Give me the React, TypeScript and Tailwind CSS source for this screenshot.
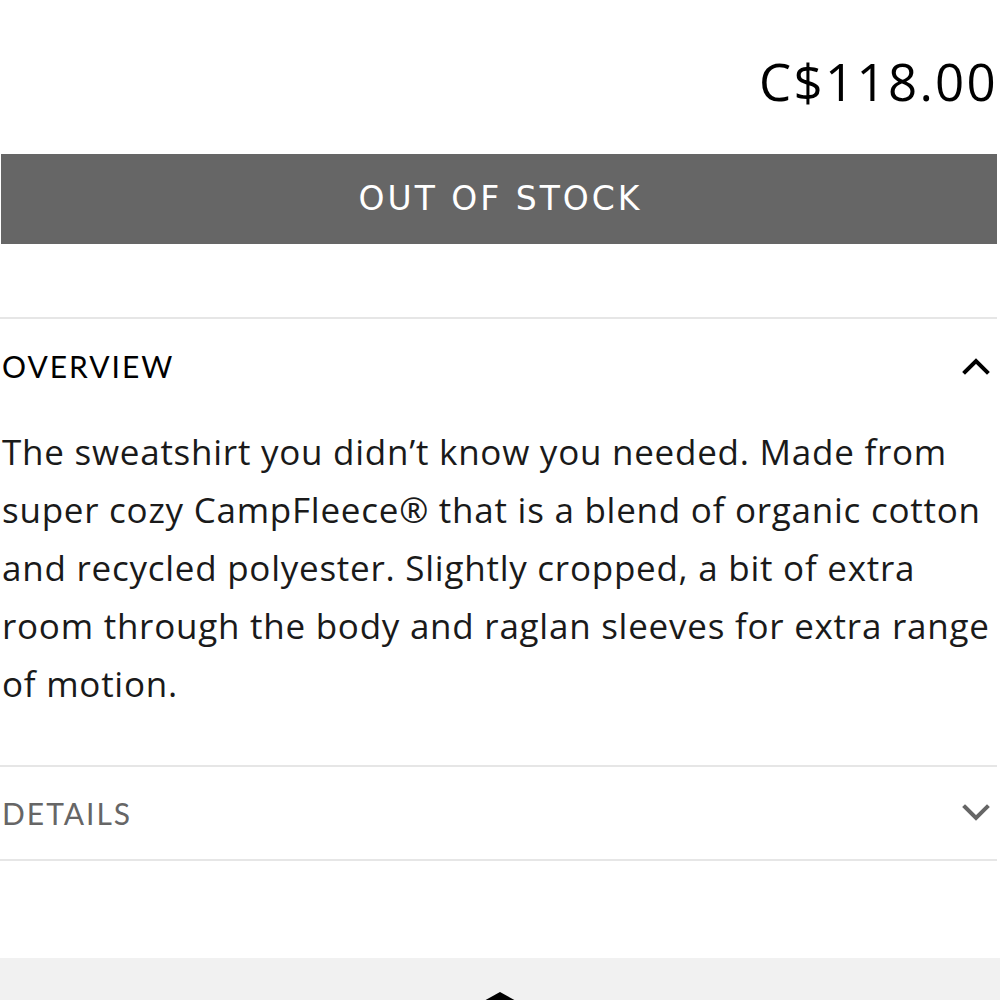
import React from "react";

const Chevron = ({ up, color }: { up?: boolean; color: string }) => (
  <svg width="28" height="18" viewBox="0 0 28 18" fill="none">
    <path
      d={up ? "M3 15 L14 4 L25 15" : "M3 3 L14 14 L25 3"}
      stroke={color}
      strokeWidth="4"
      strokeLinecap="square"
    />
  </svg>
);

export default function App() {
  return (
    <div
      className="w-[1000px] h-[1000px] overflow-hidden bg-white text-black"
      style={{ fontFamily: '"Lato", "Noto Sans", sans-serif' }}
    >
      <div className="flex justify-end pt-[46px] pr-[2px] h-[154px]">
        <span
          className="text-[51px] leading-[70px] tracking-[2.3px]"
          style={{ fontFamily: '"Open Sans", sans-serif' }}
        >
          C$118.00
        </span>
      </div>
      <div className="mx-[1px] w-[996px] h-[90px] bg-[#666666] flex items-center justify-center">
        <span
          className="text-white text-[33px] tracking-[3px] pl-[3px]"
          style={{ fontFamily: '"DejaVu Sans", sans-serif' }}
        >
          OUT OF STOCK
        </span>
      </div>
      <div className="mt-[73px] border-t-2 border-[#e6e6e6] w-[997px]">
        <div className="flex items-center justify-between h-[94px] pl-[2px] pr-[7px]">
          <span className="text-[30px] tracking-[2px]">OVERVIEW</span>
          <Chevron up color="#000" />
        </div>
        <p
          className="text-[35px] leading-[58px] tracking-[0.75px] pl-[2px] pt-[10px] pb-[52px] text-[#1a1a1a] whitespace-nowrap"
          style={{ fontFamily: '"Open Sans", sans-serif' }}
        >
          The sweatshirt you didn’t know you needed. Made from
          <br />
          super cozy CampFleece® that is a blend of organic cotton
          <br />
          and recycled polyester. Slightly cropped, a bit of extra
          <br />
          room through the body and raglan sleeves for extra range
          <br />
          of motion.
        </p>
      </div>
      <div className="border-t-2 border-[#e6e6e6] w-[997px]">
        <div className="flex items-center justify-between h-[92px] pl-[2px] pr-[7px]">
          <span className="text-[30px] tracking-[2px] text-[#666666]">DETAILS</span>
          <Chevron color="#666666" />
        </div>
      </div>
      <div className="border-t-2 border-[#e6e6e6] w-[997px] h-[99px]" />
      <div className="bg-[#f1f1f1] h-[60px] flex justify-center pt-[34px]">
        <svg width="40" height="20" viewBox="0 0 40 20">
          <path d="M2 10 L20 0 L38 10 Z" fill="#000" />
        </svg>
      </div>
    </div>
  );
}
